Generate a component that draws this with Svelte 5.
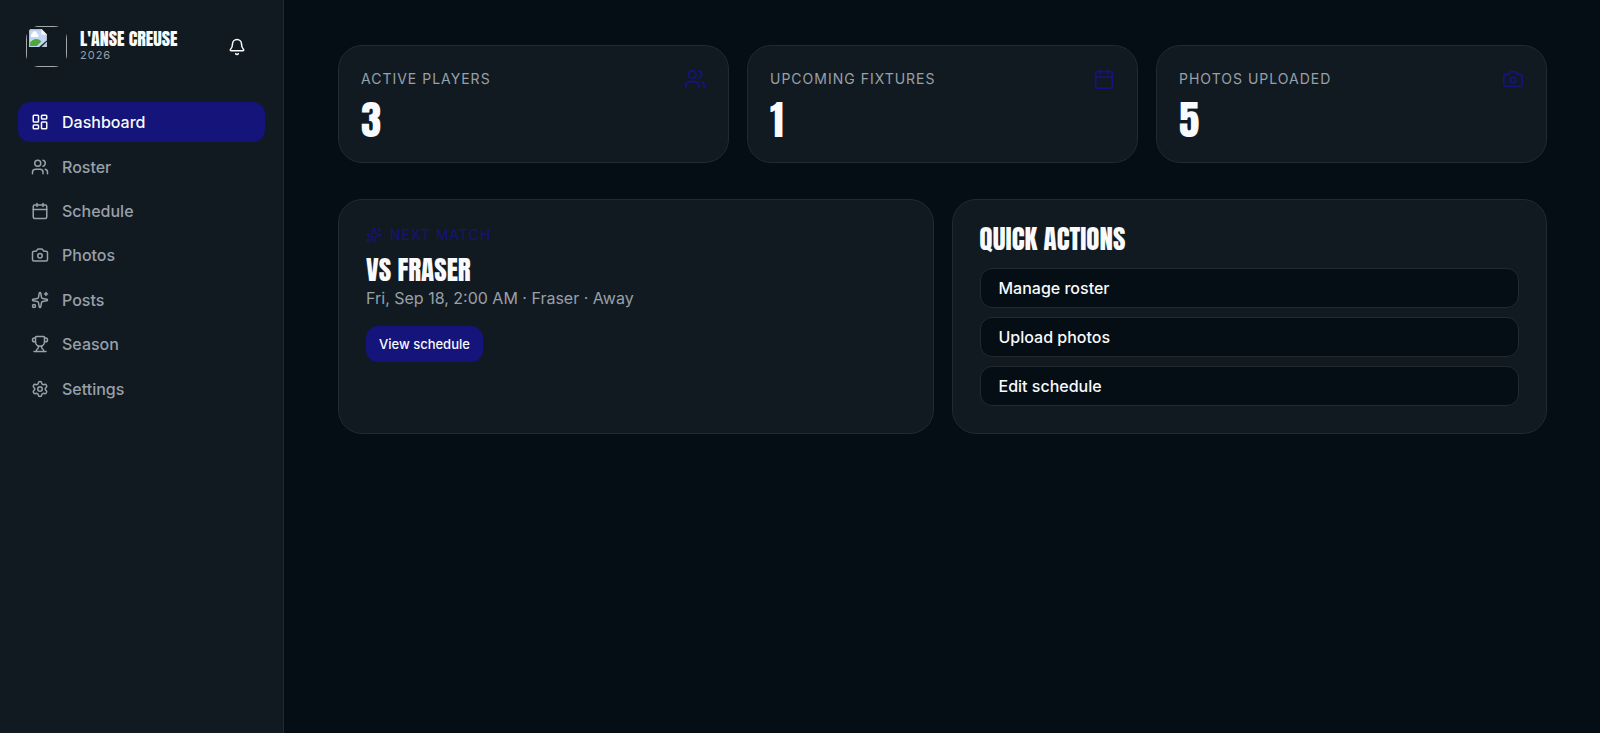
<script>
	const navItems = [
		{ label: 'Dashboard', icon: 'dashboard' },
		{ label: 'Roster', icon: 'users' },
		{ label: 'Schedule', icon: 'calendar' },
		{ label: 'Photos', icon: 'camera' },
		{ label: 'Posts', icon: 'sparkles' },
		{ label: 'Season', icon: 'trophy' },
		{ label: 'Settings', icon: 'settings' }
	];

	const stats = [
		{ label: 'Active players', value: 3, icon: 'users' },
		{ label: 'Upcoming fixtures', value: 1, icon: 'calendar' },
		{ label: 'Photos uploaded', value: 5, icon: 'camera' }
	];

	const actions = ['Manage roster', 'Upload photos', 'Edit schedule'];

	let active = $state('Dashboard');
</script>

{#snippet icon(name, size = 18)}
	<svg
		class="icon"
		width={size}
		height={size}
		viewBox="0 0 24 24"
		fill="none"
		stroke="currentColor"
		stroke-width="2"
		stroke-linecap="round"
		stroke-linejoin="round"
		aria-hidden="true"
	>
		{#if name === 'dashboard'}
			<rect width="7" height="9" x="3" y="3" rx="1" />
			<rect width="7" height="5" x="14" y="3" rx="1" />
			<rect width="7" height="9" x="14" y="12" rx="1" />
			<rect width="7" height="5" x="3" y="16" rx="1" />
		{:else if name === 'users'}
			<path d="M16 21v-2a4 4 0 0 0-4-4H6a4 4 0 0 0-4 4v2" />
			<path d="M16 3.128a4 4 0 0 1 0 7.744" />
			<path d="M22 21v-2a4 4 0 0 0-3-3.87" />
			<circle cx="9" cy="7" r="4" />
		{:else if name === 'calendar'}
			<path d="M8 2v4" />
			<path d="M16 2v4" />
			<rect width="18" height="18" x="3" y="4" rx="2" />
			<path d="M3 10h18" />
		{:else if name === 'camera'}
			<path
				d="M13.997 4a2 2 0 0 1 1.76 1.05l.486.9A2 2 0 0 0 18.003 7H20a2 2 0 0 1 2 2v9a2 2 0 0 1-2 2H4a2 2 0 0 1-2-2V9a2 2 0 0 1 2-2h1.997a2 2 0 0 0 1.759-1.048l.489-.904A2 2 0 0 1 10.004 4z"
			/>
			<circle cx="12" cy="13" r="3" />
		{:else if name === 'sparkles'}
			<path
				d="M11.017 2.814a1 1 0 0 1 1.966 0l1.051 5.558a2 2 0 0 0 1.594 1.594l5.558 1.051a1 1 0 0 1 0 1.966l-5.558 1.051a2 2 0 0 0-1.594 1.594l-1.051 5.558a1 1 0 0 1-1.966 0l-1.051-5.558a2 2 0 0 0-1.594-1.594l-5.558-1.051a1 1 0 0 1 0-1.966l5.558-1.051a2 2 0 0 0 1.594-1.594z"
			/>
			<path d="M20 2v4" />
			<path d="M22 4h-4" />
			<circle cx="4" cy="20" r="2" />
		{:else if name === 'trophy'}
			<path d="M10 14.66v1.626a2 2 0 0 1-.976 1.696A5 5 0 0 0 7 21.978" />
			<path d="M14 14.66v1.626a2 2 0 0 0 .976 1.696A5 5 0 0 1 17 21.978" />
			<path d="M18 9h1.5a1 1 0 0 0 0-5H18" />
			<path d="M4 22h16" />
			<path d="M6 9a6 6 0 0 0 12 0V3a1 1 0 0 0-1-1H7a1 1 0 0 0-1 1z" />
			<path d="M6 9H4.5a1 1 0 0 1 0-5H6" />
		{:else if name === 'settings'}
			<path
				d="M9.671 4.136a2.34 2.34 0 0 1 4.659 0 2.34 2.34 0 0 0 3.319 1.915 2.34 2.34 0 0 1 2.33 4.033 2.34 2.34 0 0 0 0 3.831 2.34 2.34 0 0 1-2.33 4.033 2.34 2.34 0 0 0-3.319 1.915 2.34 2.34 0 0 1-4.659 0 2.34 2.34 0 0 0-3.32-1.915 2.34 2.34 0 0 1-2.33-4.033 2.34 2.34 0 0 0 0-3.831A2.34 2.34 0 0 1 6.35 6.051a2.34 2.34 0 0 0 3.319-1.915"
			/>
			<circle cx="12" cy="12" r="3" />
		{:else if name === 'bell'}
			<path d="M10.268 21a2 2 0 0 0 3.464 0" />
			<path
				d="M3.262 15.326A1 1 0 0 0 4 17h16a1 1 0 0 0 .74-1.673C19.41 13.956 18 12.499 18 8A6 6 0 0 0 6 8c0 4.499-1.411 5.956-2.738 7.326"
			/>
		{/if}
	</svg>
{/snippet}

<div class="shell">
	<aside class="sidebar">
		<div class="team">
			<!-- Logo: placeholder until the team uploads one -->
			<div class="logo">
				<div class="logo-frame">
					<svg width="18" height="18" viewBox="0 0 16 16" aria-hidden="true">
						<path d="M0 0h11l5 5v5L9 16H0z" fill="#c3d6f5" />
						<path d="M0.500 15.500V0.500H11L15.500 5v5" fill="none" stroke="#b4bcc6" />
						<path d="M11 0v5h5z" fill="#f4f7fb" />
						<path d="M2 7a2 2 0 0 1 1-3 2 2 0 0 1 4 0 2 2 0 0 1 1 3z" fill="#fff" />
						<path d="M1 15v-3C4 8 8 8 11 11l-4 4z" fill="#4fa83d" />
						<path d="M11 16h5v-5z" fill="#b9c6d6" />
					</svg>
				</div>
			</div>
			<div class="team-text">
				<div class="team-name">L'Anse Creuse</div>
				<div class="team-year">2026</div>
			</div>
			<button class="bell" type="button" aria-label="Notifications">{@render icon('bell')}</button>
		</div>

		<nav class="nav">
			{#each navItems as item}
				<a
					href="#{item.label.toLowerCase()}"
					class="nav-link"
					class:active={active === item.label}
					onclick={() => (active = item.label)}
				>
					{@render icon(item.icon)}
					{item.label}
				</a>
			{/each}
		</nav>
	</aside>

	<main class="main">
		<section class="stats">
			{#each stats as stat}
				<div class="card stat">
					<div class="stat-head">
						<span class="stat-label">{stat.label}</span>
						{@render icon(stat.icon, 22)}
					</div>
					<div class="stat-value">{stat.value}</div>
				</div>
			{/each}
		</section>

		<section class="panels">
			<!-- Next match -->
			<div class="card panel">
				<div class="eyebrow">{@render icon('sparkles', 16)} Next match</div>
				<h2 class="title">vs Fraser</h2>
				<p class="details">Fri, Sep 18, 2:00 AM · Fraser · Away</p>
				<a href="#schedule" class="primary">View schedule</a>
			</div>

			<!-- Quick actions -->
			<div class="card panel">
				<h2 class="title">Quick actions</h2>
				<div class="actions">
					{#each actions as action}
						<button class="action" type="button">{action}</button>
					{/each}
				</div>
			</div>
		</section>
	</main>
</div>

<style>
	:global(body) {
		background: #060e15;
	}
	.shell {
		--surface: #121a21;
		--background: #060e15;
		--line: #22292f;
		--text: #f8fafc;
		--muted: #98a0a9;
		--accent: #14147a;
		--display: Anton, Impact, "Liberation Sans Narrow", sans-serif;
		display: flex;
		min-height: 100vh;
		background: var(--background);
		color: var(--text);
		font-family: Inter, sans-serif;
		font-size: 16px;
		line-height: 24px;
	}
	.shell * {
		box-sizing: border-box;
	}
	.icon {
		display: block;
		flex-shrink: 0;
	}
	.sidebar {
		width: 284px;
		flex-shrink: 0;
		padding: 18px;
		border-right: 1px solid var(--line);
		background: var(--surface);
	}
	.team {
		display: flex;
		align-items: center;
		gap: 13px;
		padding: 8px;
		margin-bottom: 27px;
	}
	.logo {
		width: 41px;
		height: 41px;
		flex-shrink: 0;
		border-radius: 13px;
		overflow: hidden;
	}
	.logo-frame {
		height: 100%;
		padding: 2px;
		border: 1px solid #a5a9ac;
	}
	.team-text {
		flex: 1;
		padding-bottom: 2px;
	}
	.team-name {
		font-family: var(--display);
		font-size: 18px;
		line-height: 18px;
		text-transform: uppercase;
		white-space: nowrap;
	}
	.team-year {
		color: var(--muted);
		font-size: 11px;
		line-height: 14px;
		letter-spacing: 1px;
	}
	.bell {
		display: grid;
		place-items: center;
		width: 36px;
		height: 36px;
		margin-right: 2px;
		padding: 0;
		border: 0;
		border-radius: 12px;
		background: none;
		color: var(--text);
		cursor: pointer;
	}
	.nav {
		display: grid;
		grid-auto-rows: 1fr;
		gap: 4px;
		min-height: 307px;
	}
	.nav-link {
		display: flex;
		align-items: center;
		gap: 13px;
		padding: 8px 13px;
		border-radius: 12px;
		color: var(--muted);
		font-weight: 500;
		text-decoration: none;
	}
	.nav-link.active {
		background: var(--accent);
		color: var(--text);
	}
	.main {
		flex: 1;
		min-width: 0;
		padding: 45px 53px 45px 54px;
	}
	.card {
		border: 1px solid var(--line);
		border-radius: 24px;
		background: var(--surface);
	}
	.stats {
		display: grid;
		grid-template-columns: repeat(3, 1fr);
		gap: 18px;
		margin-bottom: 36px;
	}
	.stat {
		padding: 22px;
	}
	.stat-head {
		display: flex;
		align-items: center;
		justify-content: space-between;
		color: var(--accent);
	}
	.stat-label {
		color: var(--muted);
		font-size: 14px;
		line-height: 22px;
		letter-spacing: 1px;
		text-transform: uppercase;
	}
	.stat-value {
		margin-top: 10px;
		font-family: var(--display);
		font-size: 41px;
		line-height: 40px;
	}
	.panels {
		display: grid;
		grid-template-columns: repeat(2, 1fr);
		gap: 18px;
	}
	.panel {
		padding: 27px;
	}
	.eyebrow {
		display: flex;
		align-items: center;
		gap: 8px;
		margin-bottom: 15px;
		color: var(--accent);
		font-size: 14px;
		line-height: 16px;
		letter-spacing: 1px;
		text-transform: uppercase;
	}
	.title {
		margin: 0;
		font-family: var(--display);
		font-size: 27px;
		font-weight: 400;
		line-height: 24px;
		text-transform: uppercase;
	}
	.details {
		margin: 4px 0 16px;
		color: var(--muted);
	}
	.primary {
		display: inline-block;
		padding: 7px 13px;
		border-radius: 12px;
		background: var(--accent);
		color: var(--text);
		font-size: 13px;
		font-weight: 500;
		line-height: 22px;
		text-decoration: none;
	}
	.actions {
		display: grid;
		gap: 9px;
		margin-top: 17px;
	}
	.action {
		padding: 7px 18px;
		border: 1px solid var(--line);
		border-radius: 12px;
		background: var(--background);
		color: var(--text);
		font: inherit;
		font-weight: 500;
		text-align: left;
		cursor: pointer;
	}
</style>
